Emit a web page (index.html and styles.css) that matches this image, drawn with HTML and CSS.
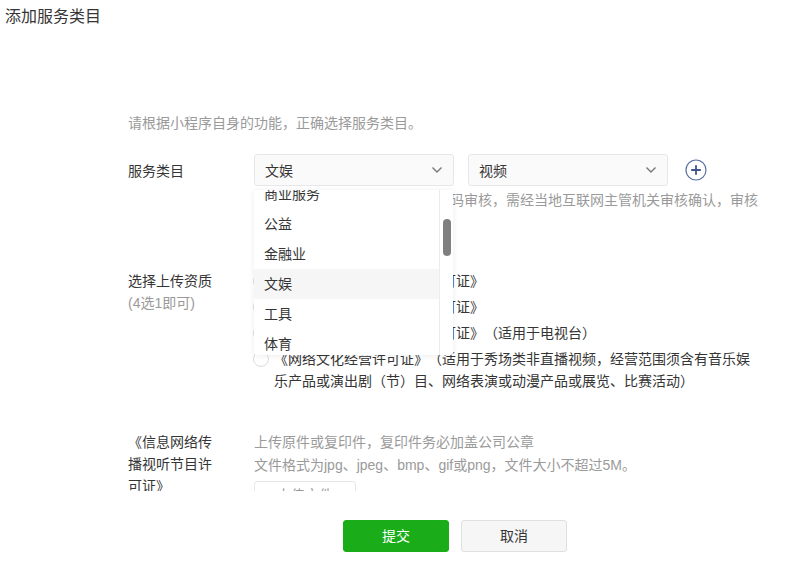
FILE: index.html
```html
<!DOCTYPE html>
<html lang="zh-CN">
<head>
    <meta charset="UTF-8">
    <title>添加服务类目</title>
    <link rel="stylesheet" href="styles.css">
</head>
<body>
    <h1 class="title">添加服务类目</h1>

    <div class="content">
        <p class="intro">请根据小程序自身的功能&#xFF0C;正确选择服务类目。</p>

        <div class="row row-category">
            <div class="label">服务类目</div>
            <div class="field">
                <div class="selects">
                    <div class="select">
                        <span>文娱</span>
                        <svg class="chevron" width="12" height="8" viewBox="0 0 12 8"><path d="M1.5 1.5l4.5 4.5 4.5-4.5" fill="none" stroke="#777" stroke-width="1.4"/></svg>
                    </div>
                    <div class="select">
                        <span>视频</span>
                        <svg class="chevron" width="12" height="8" viewBox="0 0 12 8"><path d="M1.5 1.5l4.5 4.5 4.5-4.5" fill="none" stroke="#777" stroke-width="1.4"/></svg>
                    </div>
                    <svg class="add" width="22" height="22" viewBox="0 0 22 22">
                        <circle cx="11" cy="11" r="10" fill="none" stroke="#5a6f9e" stroke-width="1.2"/>
                        <path d="M11 6.2v9.6M6.2 11h9.6" fill="none" stroke="#3f5488" stroke-width="1.8"/>
                    </svg>
                </div>
                <p class="hint">该服务类目需提交资质并进行代码审核&#xFF0C;需经当地互联网主管机关审核确认&#xFF0C;审核通过后方可上线。</p>

                <div class="dropdown">
                    <ul class="options">
                        <li>商业服务</li>
                        <li>公益</li>
                        <li>金融业</li>
                        <li class="active">文娱</li>
                        <li>工具</li>
                        <li>体育</li>
                    </ul>
                    <div class="track"><div class="thumb"></div></div>
                </div>
            </div>
        </div>

        <div class="row row-license">
            <div class="label">选择上传资质<div class="sub">(4选1即可)</div></div>
            <div class="field">
                <label class="radio"><i></i><span>《信息网络传播视听节目许可证》</span></label>
                <label class="radio"><i></i><span>《广播电视节目制作经营许可证》</span></label>
                <label class="radio"><i></i><span>《广播电视视频点播业务许可证》&#xFF08;适用于电视台&#xFF09;</span></label>
                <label class="radio"><i></i><span>《网络文化经营许可证》&#xFF08;适用于秀场类非直播视频&#xFF0C;经营范围须含有音乐娱乐产品或演出剧&#xFF08;节&#xFF09;目、网络表演或动漫产品或展览、比赛活动&#xFF09;</span></label>
            </div>
        </div>

        <div class="row row-upload">
            <div class="label">《信息网络传播视听节目许可证》</div>
            <div class="field">
                <p class="note">上传原件或复印件&#xFF0C;复印件务必加盖公司公章</p>
                <p class="note">文件格式为jpg、jpeg、bmp、gif或png&#xFF0C;文件大小不超过5M。</p>
                <div class="upload">上传文件</div>
            </div>
        </div>
    </div>

    <div class="footer">
        <button class="btn btn-primary">提交</button>
        <button class="btn">取消</button>
    </div>
</body>
</html>
```

FILE: styles.css
```css
* {
    box-sizing: border-box;
    margin: 0;
    padding: 0;
}

html, body {
    height: 562px;
    overflow: hidden;
}

body {
    font-family: "Liberation Sans", "Noto Sans CJK SC", sans-serif;
    font-size: 14px;
    color: #353535;
    background: #fff;
    display: flex;
    flex-direction: column;
    text-spacing-trim: space-all;
}

.title {
    font-size: 16px;
    font-weight: 400;
    line-height: 22px;
    padding: 6px 0 0 5px;
}

.content {
    height: 463px;
    overflow: hidden;
    padding: 84px 0 0 128px;
}

.intro {
    line-height: 22px;
    color: #9a9a9a;
}

.row {
    display: flex;
}

.label {
    width: 84px;
    margin-right: 42px;
    line-height: 22px;
    flex-shrink: 0;
}

.sub {
    color: #9a9a9a;
}

.field {
    position: relative;
    flex: 1;
}

/* 服务类目 */
.row-category {
    margin-top: 20px;
}

.row-category .label {
    padding-top: 6px;
}

.selects {
    display: flex;
    align-items: center;
}

.select {
    width: 200px;
    height: 32px;
    margin-right: 14px;
    padding: 0 10px;
    border: 1px solid #e7e7eb;
    border-radius: 3px;
    background: #fafafa;
    display: flex;
    align-items: center;
    justify-content: space-between;
}

.add {
    margin-left: 3px;
}

.hint {
    width: 504px;
    margin-top: 3px;
    line-height: 22px;
    color: #9a9a9a;
}

.dropdown {
    position: absolute;
    z-index: 1;
    top: 36px;
    left: 0;
    width: 199px;
    height: 165px;
    overflow: hidden;
    background: #fff;
    box-shadow: 0 1px 6px rgba(0, 0, 0, 0.08);
    border-radius: 0 0 3px 3px;
    display: flex;
}

.options {
    list-style: none;
    width: 185px;
    margin-top: -11px;
}

.options li {
    height: 30px;
    line-height: 30px;
    padding-left: 10px;
}

.options .active {
    background: #f6f6f6;
}

.track {
    width: 14px;
    border-left: 1px solid #ececec;
    padding: 29px 0 0 3px;
}

.thumb {
    width: 8px;
    height: 37px;
    border-radius: 4px;
    background: #7f7f7f;
}

/* 资质 */
.row-license {
    margin-top: 37px;
}

.radio {
    display: flex;
    min-height: 26px;
    line-height: 22px;
}

.radio i {
    flex-shrink: 0;
    width: 16px;
    height: 16px;
    margin: 3px 5px 0 -1px;
    border: 1px solid #dcdcdc;
    border-radius: 50%;
}

.radio span {
    width: 484px;
}

/* 上传 */
.row-upload {
    margin-top: 39px;
}

.note {
    line-height: 22px;
    color: #9a9a9a;
    margin-bottom: 1px;
}

.upload {
    width: 102px;
    height: 32px;
    margin-top: 5px;
    border: 1px solid #e7e7eb;
    border-radius: 3px;
    text-align: center;
    line-height: 26px;
    color: #9a9a9a;
}

/* 底部按钮 */
.footer {
    display: flex;
    justify-content: center;
    gap: 12px;
    padding: 29px 0 0 116px;
}

.btn {
    width: 106px;
    height: 32px;
    padding-bottom: 2px;
    font: inherit;
    color: #353535;
    background: #f6f6f6;
    border: 1px solid #e0e0e0;
    border-radius: 3px;
}

.btn-primary {
    color: #fff;
    background: #1aad19;
    border-color: #1aad19;
}
```
